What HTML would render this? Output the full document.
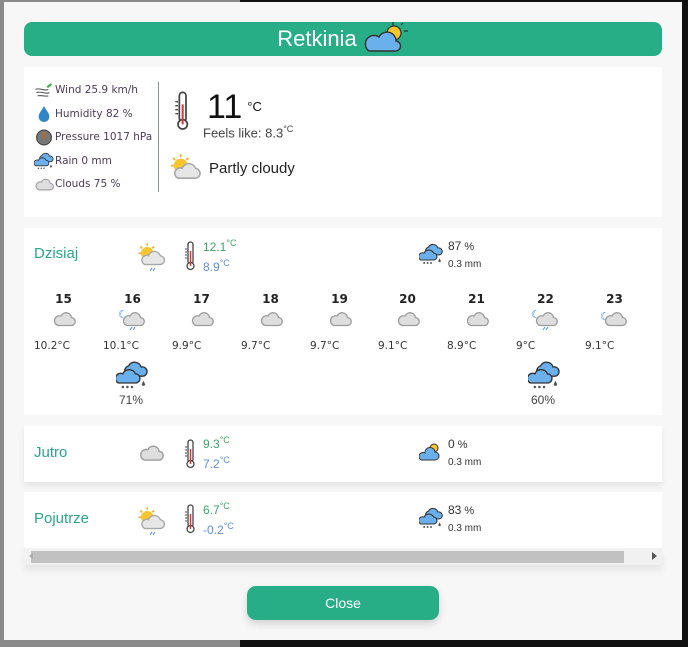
<!DOCTYPE html>
<html><head><meta charset="utf-8"><style>
*{box-sizing:border-box;margin:0;padding:0}
body{width:688px;height:647px;overflow:hidden;background:#111;font-family:"Liberation Sans","DejaVu Sans",sans-serif;position:relative}
.abs{position:absolute}
#bgl{left:0;top:0;width:240px;height:647px;background:#8a8a8a}
#modal{left:4px;top:2px;width:678px;height:638px;background:#f7f7f7}
.card{position:absolute;left:24px;width:638px;background:#fff}
.hdr{left:24px;top:22px;width:638px;height:34px;background:#27ae87;border-radius:8px;color:#fff;font-size:22px;text-align:center;line-height:34px}
.sm{font-family:"DejaVu Sans",sans-serif;font-size:10.5px;color:#4a3d52;white-space:nowrap}
.sm svg{margin-right:1px}
.g{color:#3aa66c}.b{color:#5b8fdc}
.lab{font-size:15px;color:#2ba58a}
.hour{position:absolute;width:69px;top:292px;font-family:"DejaVu Sans",sans-serif}
.hour b{display:block;text-align:center;font-size:12px;color:#222;height:16px}
.hour .t{font-size:10.5px;color:#333;margin-left:5px;margin-top:6px}
sup{font-size:9px}
</style></head><body>
<svg width="0" height="0" style="position:absolute">
<defs>
<symbol id="gc" viewBox="0 0 24 16"><path d="M6 14.5h13a4 4 0 0 0 .5-8 5.5 5.5 0 0 0-10.5-1.5A4 4 0 0 0 6 14.5z" fill="#dedede" stroke="#9c9c9c" stroke-width="1.3"/></symbol>
<symbol id="bc" viewBox="0 0 28 26"><path d="M10 14a5 5 0 0 1 1-9 6 6 0 0 1 11 1 4 4 0 0 1 2 8z" fill="#6ab0ec" stroke="#333" stroke-width="1.2"/><path d="M2 20h15a4 4 0 0 0 0-8 6 6 0 0 0-11 0 4 4 0 0 0-4 8z" fill="#6ab0ec" stroke="#333" stroke-width="1.2"/><g fill="#555"><circle cx="6" cy="23.5" r="1.1"/><circle cx="10" cy="23.5" r="1.1"/><circle cx="14" cy="23.5" r="1.1"/><path d="M24 18l1.5 3a1.5 1.5 0 0 1-3 0z"/></g></symbol>
<symbol id="sun" viewBox="0 0 24 20"><circle cx="9" cy="9" r="5" fill="#f7c52c"/><g stroke="#f5b21a" stroke-width="1.3"><path d="M9 1v2M2 9h2M3.5 3.5l1.5 1.5M14.5 3.5 13 5M5 14l1-1"/></g><path d="M7 18h12a3.5 3.5 0 0 0 .5-7 5 5 0 0 0-9.5 0A3.5 3.5 0 0 0 7 18z" fill="#e6e6e6" stroke="#a8a8a8" stroke-width="1.1"/></symbol>
<symbol id="th" viewBox="0 0 12 30"><rect x="4" y="1" width="5" height="22" rx="2.5" fill="#fff" stroke="#444" stroke-width="1.3"/><circle cx="6.5" cy="25" r="3.5" fill="#fff" stroke="#444" stroke-width="1.3"/><path d="M6.5 10v15" stroke="#d33" stroke-width="1.5"/><path d="M1 8h2M1 11h2M1 14h2M1 17h2" stroke="#444"/></symbol>
</defs></svg>
<div id="bgl" class="abs"></div>
<div id="modal" class="abs"></div>
<div class="abs hdr">Retkinia <svg width="46" height="36" viewBox="0 0 46 36" style="vertical-align:middle;margin-top:-6px"><g stroke="#333" stroke-width="1.2"><path d="M30 3v4M41 12h4M38 6l2-2"/></g><circle cx="31" cy="14" r="7" fill="#f7c52c" stroke="#333" stroke-width="1.2"/><path d="M6 32h26a5 5 0 0 0 1-10 9 9 0 0 0-17-4A7 7 0 0 0 6 32z" fill="#6ab0ec" stroke="#333" stroke-width="1.4"/></svg></div>

<div class="card" style="top:67px;height:150px">
 <div class="abs" style="left:10px;top:12px;line-height:23.5px" >
  <div class="sm"><svg width="20" height="15" viewBox="0 0 18 14" style="vertical-align:middle"><path d="M1 6c4-2 8 2 12 0M2 9c4-2 8 2 12 0M3 12c4-1 7 1 10 0" stroke="#555" fill="none"/><path d="M12 4l4-3" stroke="#4a4" stroke-width="2"/></svg>Wind 25.9 km/h</div>
  <div class="sm"><svg width="20" height="17" viewBox="0 0 18 16" style="vertical-align:middle"><path d="M9 1C6 6 4 8 4 11a5 5 0 0 0 10 0c0-3-2-5-5-10z" fill="#2d86c8"/></svg>Humidity 82 %</div>
  <div class="sm"><svg width="20" height="17" viewBox="0 0 18 16" style="vertical-align:middle"><circle cx="9" cy="8" r="7" fill="#777" stroke="#444"/><path d="M9 3v6" stroke="#d60" stroke-width="1.5"/></svg>Pressure 1017 hPa</div>
  <div class="sm"><svg width="20" height="18" style="vertical-align:middle"><use href="#bc" width="20" height="18"/></svg>Rain 0 mm</div>
  <div class="sm"><svg width="20" height="15" style="vertical-align:middle"><use href="#gc" width="20" height="15"/></svg>Clouds 75 %</div>
 </div>
 <div class="abs" style="left:134px;top:15px;width:1px;height:110px;background:#7b9a90"></div>
 <svg class="abs" style="left:150px;top:22px" width="16" height="44"><use href="#th" width="16" height="44"/></svg>
 <div class="abs" style="left:183px;top:22px;font-size:34px;color:#111;line-height:36px">11<span style="font-size:13px;vertical-align:top;margin-left:5px">°C</span></div>
 <div class="abs" style="left:179px;top:57px;font-size:13px;color:#444">Feels like: 8.3<sup>°C</sup></div>
 <svg class="abs" style="left:143px;top:86px" width="36" height="28"><use href="#sun" width="36" height="28"/></svg>
 <div class="abs" style="left:185px;top:93px;font-size:15px;color:#222">Partly cloudy</div>
</div>

<div class="card" style="top:228px;height:187px">
 <div class="abs lab" style="left:10px;top:17px">Dzisiaj</div>
 <svg class="abs" style="left:112px;top:14px" width="30" height="30"><use href="#sun" width="30" height="25"/><path d="M14 29l2-3M17 29l2-3" stroke="#4a8ee6"/></svg>
 <svg class="abs" style="left:160px;top:11px" width="12" height="34"><use href="#th" width="12" height="34"/></svg>
 <div class="abs g" style="left:179px;top:10px;font-size:12px">12.1<sup>°C</sup></div>
 <div class="abs b" style="left:179px;top:30px;font-size:12px">8.9<sup>°C</sup></div>
 <svg class="abs" style="left:395px;top:14px" width="24" height="24"><use href="#bc" width="24" height="24"/></svg>
 <div class="abs" style="left:424px;top:11px;font-size:12px;color:#333">87<span style="font-size:11px"> %</span></div>
 <div class="abs" style="left:424px;top:31px;font-size:10px;color:#333">0.3<span> mm</span></div>
</div>
<div class="hour" style="left:29px"><b>15</b><svg width="69" height="22"><use href="#gc" x="23" y="3" width="24" height="16"/></svg><div class="t">10.2°C</div></div>
<div class="hour" style="left:98px"><b>16</b><svg width="69" height="22"><text x="20" y="10" fill="#3a8ee6" font-size="11" font-weight="bold">☾</text><use href="#gc" x="23" y="3" width="24" height="16"/><path d="M32 22l2-3M35 22l2-3" stroke="#4a8ee6"/></svg><div class="t">10.1°C</div></div>
<div class="hour" style="left:167px"><b>17</b><svg width="69" height="22"><use href="#gc" x="23" y="3" width="24" height="16"/></svg><div class="t">9.9°C</div></div>
<div class="hour" style="left:236px"><b>18</b><svg width="69" height="22"><use href="#gc" x="23" y="3" width="24" height="16"/></svg><div class="t">9.7°C</div></div>
<div class="hour" style="left:305px"><b>19</b><svg width="69" height="22"><use href="#gc" x="23" y="3" width="24" height="16"/></svg><div class="t">9.7°C</div></div>
<div class="hour" style="left:373px"><b>20</b><svg width="69" height="22"><use href="#gc" x="23" y="3" width="24" height="16"/></svg><div class="t">9.1°C</div></div>
<div class="hour" style="left:442px"><b>21</b><svg width="69" height="22"><use href="#gc" x="23" y="3" width="24" height="16"/></svg><div class="t">8.9°C</div></div>
<div class="hour" style="left:511px"><b>22</b><svg width="69" height="22"><text x="20" y="10" fill="#3a8ee6" font-size="11" font-weight="bold">☾</text><use href="#gc" x="23" y="3" width="24" height="16"/><path d="M32 22l2-3M35 22l2-3" stroke="#4a8ee6"/></svg><div class="t">9°C</div></div>
<div class="hour" style="left:580px"><b>23</b><svg width="69" height="22"><text x="20" y="12" fill="#3a8ee6" font-size="11" font-weight="bold">☾</text><use href="#gc" x="23" y="3" width="24" height="16"/></svg><div class="t">9.1°C</div></div>
<svg class="abs" style="left:116px;top:360px" width="32" height="30"><use href="#bc" width="32" height="30"/></svg>
<div class="abs" style="left:119px;top:393px;font-size:12px;color:#444">71%</div>
<svg class="abs" style="left:528px;top:360px" width="32" height="30"><use href="#bc" width="32" height="30"/></svg>
<div class="abs" style="left:531px;top:393px;font-size:12px;color:#444">60%</div>

<div class="card" style="top:426px;height:56px;box-shadow:0 4px 6px rgba(0,0,0,.08)">
 <div class="abs lab" style="left:10px;top:18px">Jutro</div>
 <svg class="abs" style="left:114px;top:18px" width="26" height="18"><use href="#gc" width="26" height="18"/></svg>
 <svg class="abs" style="left:160px;top:11px" width="12" height="34"><use href="#th" width="12" height="34"/></svg>
 <div class="abs g" style="left:179px;top:9px;font-size:12px">9.3<sup>°C</sup></div>
 <div class="abs b" style="left:179px;top:29px;font-size:12px">7.2<sup>°C</sup></div>
 <svg class="abs" style="left:395px;top:14px" width="24" height="22" viewBox="0 0 24 22"><circle cx="15" cy="8" r="4" fill="#f7c52c" stroke="#333"/><path d="M2 20h14a4 4 0 0 0 0-8 5 5 0 0 0-10 1A3.5 3.5 0 0 0 2 20z" fill="#6ab0ec" stroke="#333"/></svg>
 <div class="abs" style="left:424px;top:11px;font-size:12px;color:#333">0<span style="font-size:11px"> %</span></div>
 <div class="abs" style="left:424px;top:31px;font-size:10px;color:#333">0.3 mm</div>
</div>

<div class="card" style="top:492px;height:56px">
 <div class="abs lab" style="left:10px;top:18px">Pojutrze</div>
 <svg class="abs" style="left:112px;top:14px" width="30" height="30"><use href="#sun" width="30" height="25"/><path d="M14 29l2-3M17 29l2-3" stroke="#4a8ee6"/></svg>
 <svg class="abs" style="left:160px;top:10px" width="12" height="34"><use href="#th" width="12" height="34"/></svg>
 <div class="abs g" style="left:179px;top:9px;font-size:12px">6.7<sup>°C</sup></div>
 <div class="abs b" style="left:179px;top:29px;font-size:12px">-0.2<sup>°C</sup></div>
 <svg class="abs" style="left:395px;top:14px" width="24" height="24"><use href="#bc" width="24" height="24"/></svg>
 <div class="abs" style="left:424px;top:11px;font-size:12px;color:#333">83<span style="font-size:11px"> %</span></div>
 <div class="abs" style="left:424px;top:31px;font-size:10px;color:#333">0.3 mm</div>
</div>
<div class="abs" style="left:24px;top:548px;width:638px;height:17px;background:#f1f1f1;box-shadow:0 5px 8px rgba(0,0,0,.08)">
 <div class="abs" style="left:7px;top:3px;width:593px;height:12px;background:#c1c1c1"></div>
 <div class="abs" style="left:5px;top:5px;border:3px solid transparent;border-right:4px solid #aaa;border-left:0"></div>
 <div class="abs" style="left:628px;top:4px;border:4px solid transparent;border-left:5px solid #555;border-right:0"></div>
</div>
<div class="abs" style="left:247px;top:586px;width:192px;height:34px;background:#27ae87;border-radius:9px;color:#fff;font-size:14px;text-align:center;line-height:34px;box-shadow:0 4px 8px rgba(0,0,0,.15)">Close</div>
</body></html>
